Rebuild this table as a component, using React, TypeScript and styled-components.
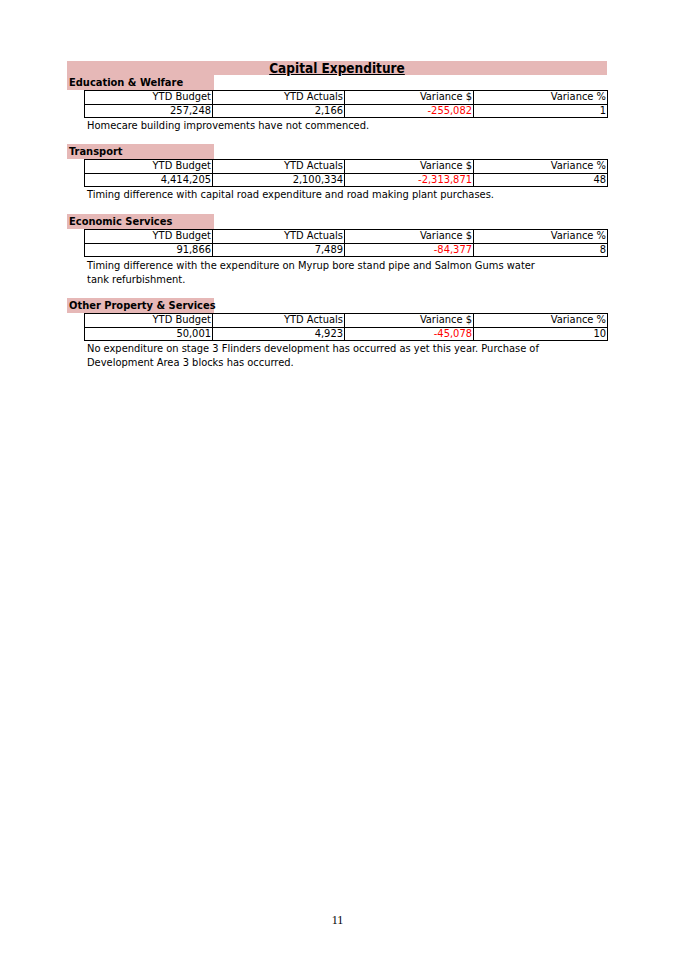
import React from "react";
import styled, { createGlobalStyle } from "styled-components";

const Global = createGlobalStyle`
  html, body { margin: 0; padding: 0; background: #ffffff; }
  body { font-family: "DejaVu Sans Condensed", "DejaVu Sans", sans-serif; color: #000; }
`;

const Page = styled.div`
  width: 675px;
  height: 954px;
  box-sizing: border-box;
  display: flex;
  flex-direction: column;
  padding: 61px 0 0 67px;
`;

const TitleBand = styled.div`
  width: 540px;
  height: 14px;
  background: #e6b8b7;
  display: flex;
  justify-content: center;
  align-items: center;
  font-weight: bold;
  font-size: 13.5px;
  text-decoration: underline;
  line-height: 14px;
`;

const Section = styled.section<{ $gap: number }>`
  display: flex;
  flex-direction: column;
  margin-top: ${(p) => p.$gap}px;
`;

const Label = styled.div`
  width: 147px;
  height: 15px;
  background: #e6b8b7;
  font-weight: bold;
  font-size: 11px;
  line-height: 15px;
  padding-left: 2px;
  box-sizing: border-box;
  white-space: nowrap;
`;

const Table = styled.table`
  margin-left: 17px;
  width: 523px;
  border-collapse: collapse;
  table-layout: fixed;
  font-size: 11px;
`;

const Cell = styled.td<{ $red?: boolean }>`
  border: 1px solid #000;
  text-align: right;
  padding: 0 1px 0 0;
  height: 12.5px;
  line-height: 12.5px;
  white-space: nowrap;
  color: ${(p) => (p.$red ? "#ff0000" : "#000")};
`;

const Notes = styled.div<{ $offset: number }>`
  margin-top: ${(p) => p.$offset}px;
  margin-left: 20px;
  font-size: 11px;
  line-height: 14px;
  white-space: nowrap;
`;

const Footer = styled.div`
  margin-top: auto;
  margin-left: -67px;
  padding-bottom: 26px;
  text-align: center;
  font-family: "Liberation Serif", serif;
  font-size: 12px;
`;

type Row = {
  label: string;
  budget: string;
  actual: string;
  variance: string;
  pct: string;
  notes: string[];
  gap: number;
  noteOffset: number;
};

const rows: Row[] = [
  {
    label: "Education & Welfare",
    budget: "257,248",
    actual: "2,166",
    variance: "-255,082",
    pct: "1",
    notes: ["Homecare building improvements have not commenced."],
    gap: 0,
    noteOffset: 1,
  },
  {
    label: "Transport",
    budget: "4,414,205",
    actual: "2,100,334",
    variance: "-2,313,871",
    pct: "48",
    notes: ["Timing difference with capital road expenditure and road making plant purchases."],
    gap: 11,
    noteOffset: 1,
  },
  {
    label: "Economic Services",
    budget: "91,866",
    actual: "7,489",
    variance: "-84,377",
    pct: "8",
    notes: [
      "Timing difference with the expenditure on Myrup bore stand pipe and Salmon Gums water",
      "tank refurbishment.",
    ],
    gap: 12,
    noteOffset: 2,
  },
  {
    label: "Other Property & Services",
    budget: "50,001",
    actual: "4,923",
    variance: "-45,078",
    pct: "10",
    notes: [
      "No expenditure on stage 3 Flinders development has occurred as yet this year. Purchase of",
      "Development Area 3 blocks has occurred.",
    ],
    gap: 11,
    noteOffset: 1,
  },
];

export default function App() {
  return (
    <>
      <Global />
      <Page>
        <TitleBand>Capital Expenditure</TitleBand>
        {rows.map((r) => (
          <Section key={r.label} $gap={r.gap}>
            <Label>{r.label}</Label>
            <Table>
              <colgroup>
                <col style={{ width: "128px" }} />
                <col style={{ width: "132px" }} />
                <col style={{ width: "129px" }} />
                <col style={{ width: "134px" }} />
              </colgroup>
              <tbody>
                <tr>
                  <Cell>YTD Budget</Cell>
                  <Cell>YTD Actuals</Cell>
                  <Cell>Variance $</Cell>
                  <Cell>Variance %</Cell>
                </tr>
                <tr>
                  <Cell>{r.budget}</Cell>
                  <Cell>{r.actual}</Cell>
                  <Cell $red>{r.variance}</Cell>
                  <Cell>{r.pct}</Cell>
                </tr>
              </tbody>
            </Table>
            <Notes $offset={r.noteOffset}>
              {r.notes.map((n) => (
                <div key={n}>{n}</div>
              ))}
            </Notes>
          </Section>
        ))}
        <Footer>11</Footer>
      </Page>
    </>
  );
}
